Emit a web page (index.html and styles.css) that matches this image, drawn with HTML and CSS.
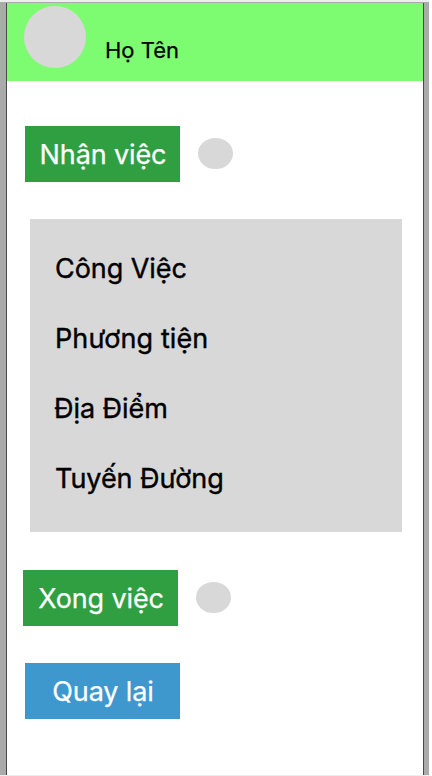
FILE: index.html
```html
<!DOCTYPE html>
<html lang="vi">
<head>
<meta charset="utf-8">
<title>Công việc</title>
<link rel="stylesheet" href="styles.css">
</head>
<body>
<div class="canvas">
  <main class="screen">
    <header class="header">
      <div class="avatar"></div>
      <div class="name">Họ Tên</div>
    </header>
    <div class="row row-accept">
      <button class="button accept">Nhận việc</button>
      <span class="status"></span>
    </div>
    <ul class="details">
      <li>Công Việc</li>
      <li class="wide">Phương tiện</li>
      <li class="stroke-start">Địa Điểm</li>
      <li>Tuyến Đường</li>
    </ul>
    <div class="row row-done">
      <button class="button done">Xong việc</button>
      <span class="status"></span>
    </div>
    <div class="row row-back">
      <button class="button back">Quay lại</button>
    </div>
  </main>
</div>
</body>
</html>
```
FILE: styles.css
```css
* {
  box-sizing: border-box;
}

body {
  margin: 0;
  width: 432px;
  height: 776px;
  overflow: hidden;
  background: #fff;
  font-family: Inter, "Liberation Sans", sans-serif;
}

.canvas {
  width: 429px;
  height: 776px;
  padding: 1px 5px 0 6px;
  border-top: 2px solid #eee;
  border-bottom: 1px solid #eee;
  background: #aaa;
}

.screen {
  height: 772px;
  border-left: 1px solid #4a4a4a;
  border-right: 1px solid #4a4a4a;
  background: #fff;
}

.header {
  display: flex;
  align-items: flex-start;
  gap: 19px;
  height: 78px;
  padding: 3px 0 0 17px;
  background: #7dfc71;
}

.avatar {
  width: 62px;
  height: 62px;
  border-radius: 50%;
  background: #d8d8d8;
}

.name {
  margin-top: 31px;
  font-size: 22px;
  line-height: 27px;
  color: #000;
  -webkit-text-stroke: 0.25px #000;
}

.row {
  display: flex;
  align-items: center;
  gap: 18px;
  height: 56px;
}

.row-accept {
  margin: 45px 0 0 18px;
}

.row-done {
  margin: 38px 0 0 16px;
}

.row-back {
  margin: 37px 0 0 18px;
}

.button {
  width: 155px;
  height: 56px;
  padding: 2px 0 0 1px;
  border: 0;
  background: #2f9f42;
  color: #fff;
  font: 400 27px/54px Inter, "Liberation Sans", sans-serif;
  letter-spacing: -0.12px;
  white-space: nowrap;
  -webkit-text-stroke: 0.25px #fff;
}

.back {
  background: #3e97cd;
}

.status {
  width: 34.5px;
  height: 31px;
  margin-bottom: 1px;
  border-radius: 50%;
  background: #d8d8d8;
}

.details {
  width: 372px;
  height: 313px;
  margin: 37px 0 0 23px;
  padding: 15px 0 0 25px;
  background: #d8d8d8;
  color: #000;
  font-size: 27px;
  line-height: 70px;
  letter-spacing: -0.05px;
  list-style: none;
  -webkit-text-stroke: 0.4px #000;
}

.wide {
  letter-spacing: 0.1px;
}

.stroke-start {
  margin-left: -1px;
}
```
